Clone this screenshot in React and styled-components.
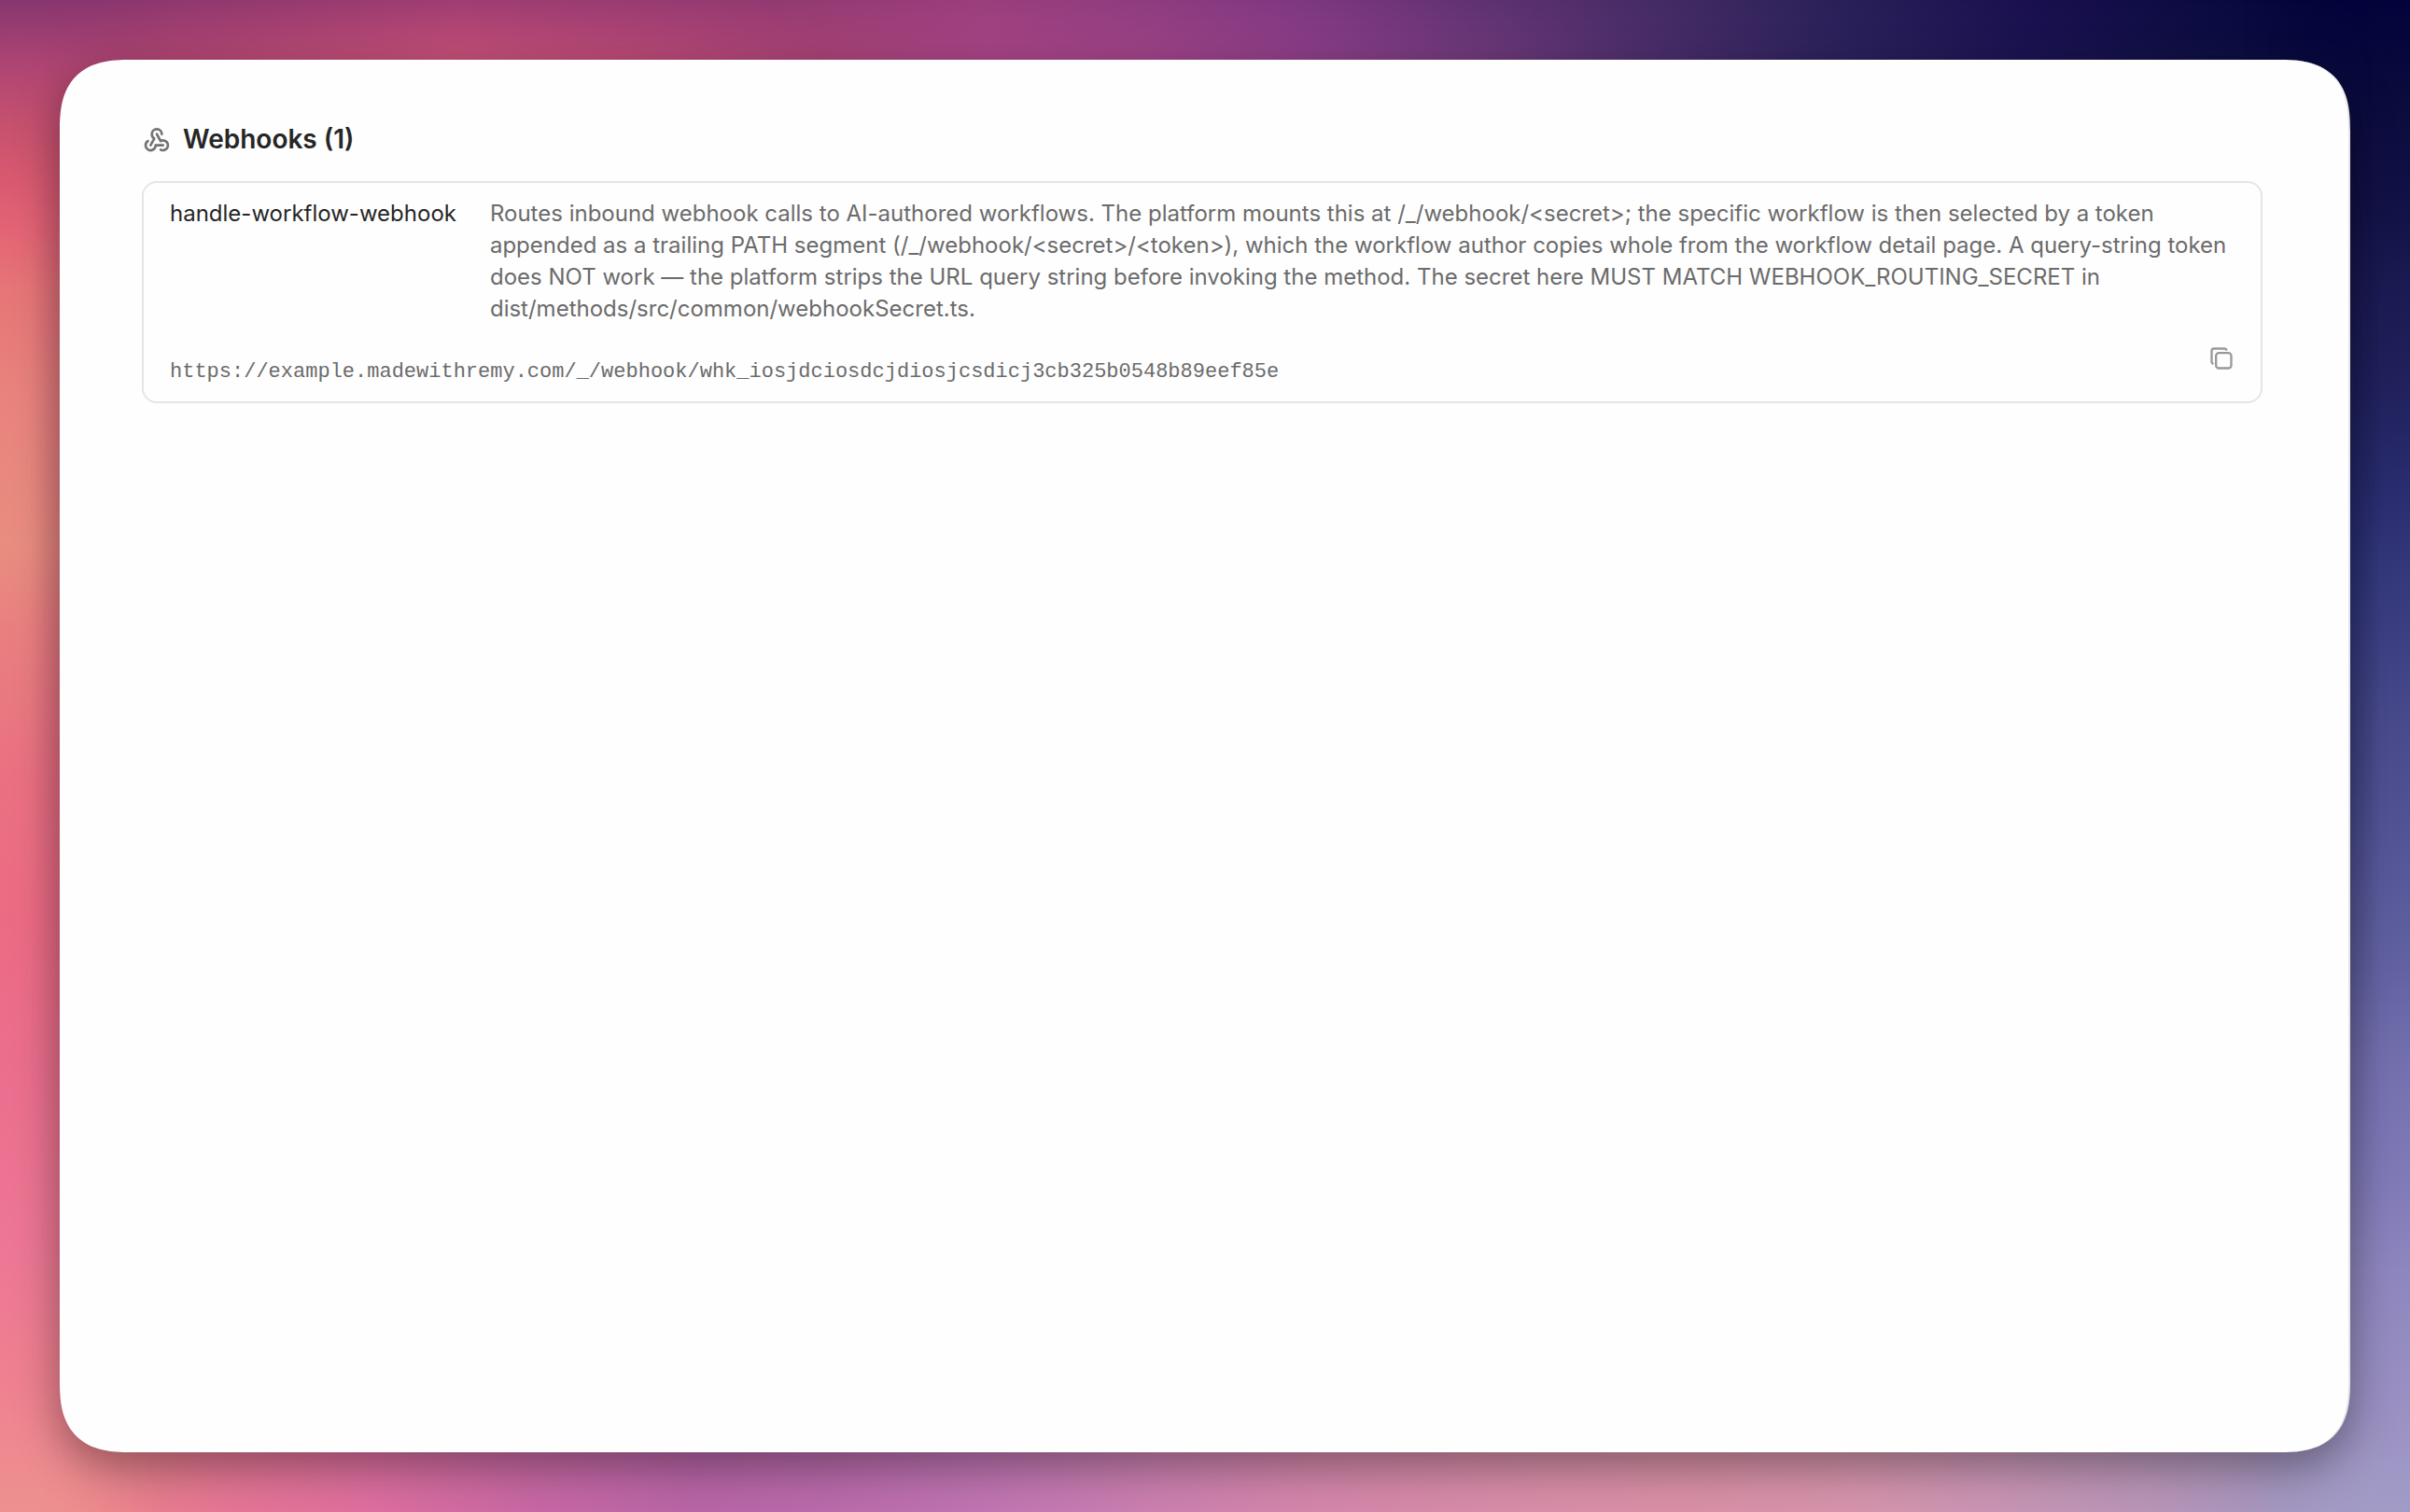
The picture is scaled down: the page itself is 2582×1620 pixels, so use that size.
import React, { useState } from 'react';
import styled, { createGlobalStyle } from 'styled-components';
import { TbCopy, TbWebhook } from 'react-icons/tb';

const GlobalStyle = createGlobalStyle`
  * {
    box-sizing: border-box;
  }

  body {
    margin: 0;
    font-family: Inter, 'Liberation Sans', sans-serif;
    color: #262626;
  }
`;

const topEdge = `#87366f 0%, #93396f 10%, #a03d72 19%, #933a72 32%, #9a3f7c 41%, #8e3c80 48%,
  #7e3880 54%, #613272 61%, #402a62 70%, #281f57 77%, #1a1050 84%, #0c0b42 91%, #02023a 99%`;

const topInner = `#a8436f 0%, #b94a73 10%, #c95378 19%, #bd4b76 27%, #ab4476 34%, #a94588 41%,
  #a04488 48%, #8c3f88 55%, #6e3a79 62%, #4e2f6d 68%, #30245e 75%, #1c1452 84%, #111144 91%, #06083a 100%`;

const leftEdge = `#87366f 0%, #ac4473 4%, #c5506f 8%, #d95a70 12%, #e36375 15%, #e67577 19%,
  #e8837d 26%, #e98d7f 36%, #e97f80 42%, #ea7181 51%, #ec6b84 61%, #eb6e8d 70%, #ed7795 83%,
  #ef8090 91%, #ee8a90 96%, #ee908f 100%`;

const rightEdge = `#03023a 0%, #0a0a3d 6%, #121145 13%, #1b1a52 19%, #21225e 26%, #292c6e 32%,
  #34397c 38%, #484a8c 48%, #505294 54%, #6262a2 64%, #736fae 70%, #807ab8 78%, #8e86be 84%,
  #998fc2 92%, #a29bc6 100%`;

const bottomEdge = `#ee908f 0%, #e8808c 5%, #e47595 10%, #de6f9e 15%, #c868a4 22%, #b865a6 29%,
  #b96aaa 34%, #c075b2 41%, #cb80b0 48%, #d486aa 54%, #d88ea8 64%, #d990a6 70%, #d694ac 77%,
  #c995b4 83%, #b995b8 89%, #a596be 95%, #a29bc6 100%`;

const Page = styled.div`
  display: grid;
  min-height: 100vh;
  background: #03023a;

  > * {
    grid-area: 1 / 1;
    min-width: 0;
  }
`;

const Wash = styled.div`
  background: linear-gradient(${(props) => props.$to}, ${(props) => props.$colors});
  mask-image: ${(props) => props.$mask || 'none'};
`;

const Frame = styled.div`
  z-index: 1;
  display: flex;
  padding: 64px;
`;

const Panel = styled.main`
  flex: 1;
  min-width: 0;
  padding: 64px 92px 64px 88px;
  background: #fefefe;
  border-right: 2px solid #e5e5e5;
  border-radius: 60px;
  box-shadow: 0 16px 48px rgba(0, 0, 0, 0.38);

  @supports (corner-shape: squircle) {
    border-radius: 76px;
    corner-shape: superellipse(1.4);
  }
`;

const Heading = styled.h1`
  display: flex;
  align-items: center;
  gap: 12px;
  margin: 0 0 24px;
  font-size: 28px;
  font-weight: 600;
  line-height: 42px;

  svg {
    color: #737373;
  }
`;

const Card = styled.section`
  display: flex;
  flex-direction: column;
  gap: 16px;
  padding: 16px 28px 14px;
  border: 2px solid #e5e5e5;
  border-radius: 16px;
`;

const Details = styled.div`
  display: flex;
  align-items: flex-start;
  gap: 36px;
  font-size: 24px;
  line-height: 34px;
`;

const Name = styled.h2`
  flex: none;
  margin: 0;
  font-size: 24px;
  font-weight: 400;
`;

const Description = styled.p`
  flex: 1;
  min-width: 0;
  margin: 0;
  color: #6b6b6b;
`;

const UrlRow = styled.div`
  display: flex;
  align-items: flex-start;
  justify-content: space-between;
  gap: 16px;
`;

const Url = styled.code`
  padding-top: 18px;
  font-family: 'Liberation Mono', monospace;
  font-size: 22px;
  line-height: 34px;
  color: #6b6b6b;
  overflow-wrap: anywhere;
`;

const CopyButton = styled.button`
  display: flex;
  flex: none;
  padding: 6px 0;
  border: none;
  background: none;
  color: #999;
  cursor: pointer;
`;

const webhooks = [
  {
    name: 'handle-workflow-webhook',
    description:
      'Routes inbound webhook calls to AI-authored workflows. The platform mounts this at /_/webhook/<secret>; the specific workflow is then selected by a token appended as a trailing PATH segment (/_/webhook/<secret>/<token>), which the workflow author copies whole from the workflow detail page. A query-string token does NOT work — the platform strips the URL query string before invoking the method. The secret here MUST MATCH WEBHOOK_ROUTING_SECRET in dist/methods/src/common/webhookSecret.ts.',
    url: 'https://example.madewithremy.com/_/webhook/whk_iosjdciosdcjdiosjcsdicj3cb325b0548b89eef85e',
  },
];

const WebhookCard = ({ name, description, url }) => {
  const [copied, setCopied] = useState(false);

  const handleCopy = async () => {
    try {
      await navigator.clipboard.writeText(url);
      setCopied(true);
    } catch (error) {
      setCopied(false);
    }
  };

  return (
    <Card>
      <Details>
        <Name>{name}</Name>
        <Description>{description}</Description>
      </Details>
      <UrlRow>
        <Url>{url}</Url>
        <CopyButton type="button" aria-label={copied ? 'Copied' : 'Copy URL'} onClick={handleCopy}>
          <TbCopy size={28} />
        </CopyButton>
      </UrlRow>
    </Card>
  );
};

const App = () => (
  <>
    <GlobalStyle />
    <Page>
      <Wash $to="to right" $colors={topEdge} />
      <Wash $to="to right" $colors={topInner} $mask="linear-gradient(to bottom, transparent, #000 72px)" />
      <Wash $to="to right" $colors={bottomEdge} $mask="linear-gradient(to top, #000 64px, transparent 50%)" />
      <Wash $to="to bottom" $colors={leftEdge} $mask="linear-gradient(to right, #000 32px, transparent 180px)" />
      <Wash $to="to bottom" $colors={rightEdge} $mask="linear-gradient(to left, #000 32px, transparent 180px)" />
      <Frame>
        <Panel>
          <Heading>
            <TbWebhook size={32} />
            Webhooks ({webhooks.length})
          </Heading>
          {webhooks.map((webhook) => (
            <WebhookCard key={webhook.name} {...webhook} />
          ))}
        </Panel>
      </Frame>
    </Page>
  </>
);

export default App;
